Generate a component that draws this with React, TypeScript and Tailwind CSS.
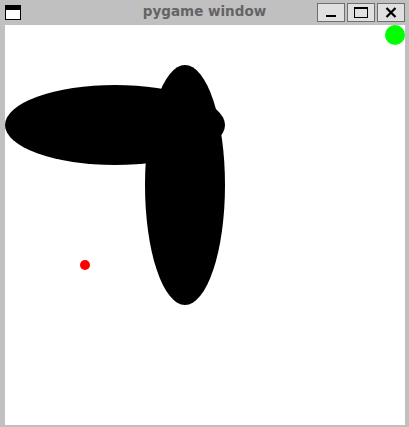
function WinButton({ children }: { children: React.ReactNode }) {
  return (
    <div className="w-[28px] h-[19px] border border-[#6e6e6e] bg-[#e0e0e0] flex items-center justify-center">
      {children}
    </div>
  );
}

export default function App() {
  return (
    <div className="w-[409px] h-[427px] bg-[#c0c0c0] flex flex-col" style={{ fontFamily: "'DejaVu Sans', sans-serif" }}>
      {/* title bar */}
      <div className="h-[25px] flex items-start relative">
        <div className="ml-[5px] mt-[5px] w-[16px] h-[15px] border border-black bg-white">
          <div className="h-[4px] bg-black" />
        </div>
        <div className="absolute left-0 right-0 top-[3px] text-center text-[13.5px] font-bold text-[#646464] leading-[16px]">
          pygame window
        </div>
        <div className="ml-auto mt-[3px] mr-[4px] flex gap-[2px]">
          <WinButton>
            <div className="w-[10px] h-[2px] bg-black mt-[7px]" />
          </WinButton>
          <WinButton>
            <div className="w-[14px] h-[11px] border border-black border-t-[2px]" />
          </WinButton>
          <WinButton>
            <svg width="12" height="11" viewBox="0 0 12 11">
              <path d="M1.5 1 L10.5 10 M10.5 1 L1.5 10" stroke="black" strokeWidth="2.2" />
            </svg>
          </WinButton>
        </div>
      </div>
      {/* canvas */}
      <div className="ml-[5px] w-[400px] h-[400px] bg-white">
        <svg width="400" height="400" viewBox="0 0 400 400">
          <ellipse cx="110" cy="100" rx="110" ry="40" fill="black" />
          <ellipse cx="180" cy="160" rx="40" ry="120" fill="black" />
          <circle cx="390" cy="10" r="10" fill="#00ff00" />
          <circle cx="80" cy="240" r="5" fill="#ff0000" />
        </svg>
      </div>
    </div>
  );
}
